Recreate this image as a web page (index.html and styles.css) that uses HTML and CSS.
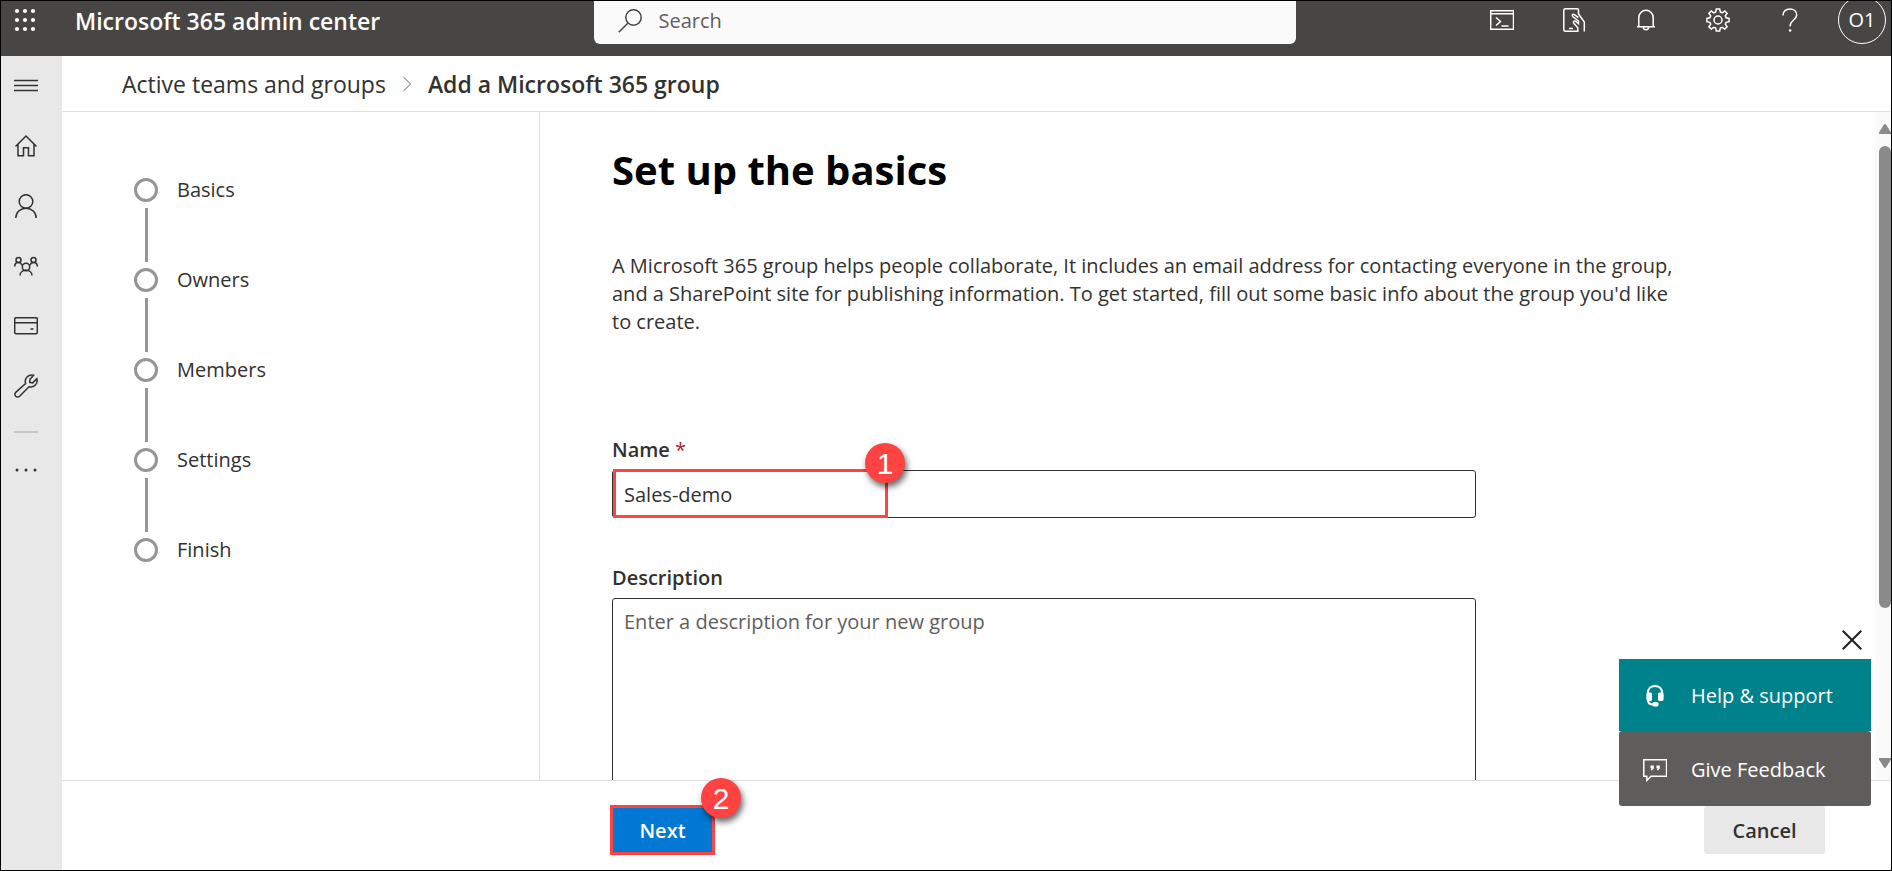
FILE: index.html
```html
<!DOCTYPE html>
<html lang="en">
<head>
<meta charset="utf-8">
<title>Add a Microsoft 365 group</title>
<link rel="stylesheet" href="styles.css">
</head>
<body>
<div class="app">
  <header class="topbar">
    <button class="icon-button launcher" aria-label="App launcher">
      <svg class="icon" viewBox="0 0 24 24"><circle cx="3" cy="3" r="2.1"/><circle cx="11" cy="3" r="2.1"/><circle cx="19" cy="3" r="2.1"/><circle cx="3" cy="12" r="2.1"/><circle cx="11" cy="12" r="2.1"/><circle cx="19" cy="12" r="2.1"/><circle cx="3" cy="21" r="2.1"/><circle cx="11" cy="21" r="2.1"/><circle cx="19" cy="21" r="2.1"/></svg>
    </button>
    <div class="brand">Microsoft 365 admin center</div>
    <div class="search">
      <svg class="icon" viewBox="0 0 24 24"><circle cx="15.500" cy="8.500" r="7.700"/><path d="M10 14L.8 23.200"/></svg>
      <input class="search-input" type="text" placeholder="Search" aria-label="Search">
    </div>
    <nav class="tools" aria-label="Tools">
      <button class="icon-button" aria-label="Shell">
        <svg class="icon" viewBox="0 0 24 24"><path d="M.7 2.700h22.800v18.600H.7zM.7 5.800h22.800M6 9.500l4.500 4L6 17.500M11.500 18h7"/></svg>
      </button>
      <button class="icon-button" aria-label="Mobile app">
        <svg class="icon" viewBox="0 0 24 24"><path d="M16.500 6V2.300Q16.500.8 15 .8H3.300Q1.800.8 1.800 2.300v19.400q0 1.500 1.500 1.500h12.500v-3.500l-4-4.500c-1-1.400.3-3 2-1.800l2.700 2.300V13l-5.500-4.200c-1.800-1.700-.2-3.200 1.400-2.200l4 3M16.500 6l5.800 8v9.500M7 20.500h4"/></svg>
      </button>
      <button class="icon-button" aria-label="Notifications">
        <svg class="icon" viewBox="0 0 24 24"><path d="M4.800 18.200V9.500a7.200 7.200 0 0 1 14.400 0v8.700M3 18.700h18M9.300 19a2.700 2.700 0 0 0 5.400 0"/></svg>
      </button>
      <button class="icon-button" aria-label="Settings">
        <svg class="icon" viewBox="0 0 24 24"><circle cx="12" cy="12" r="4"/><path d="M10.300 1h3.400l.6 3 1.900.8L18.800 3l2.300 2.300-1.800 2.600.8 1.900 3 .6v3.300l-3 .6-.8 1.900 1.800 2.600-2.300 2.300-2.600-1.800-1.900.8-.6 3h-3.400l-.6-3-1.900-.8-2.600 1.800-2.300-2.300 1.800-2.600-.8-1.900-3-.6v-3.300l3-.6.8-1.900-1.800-2.600L5.200 3l2.600 1.800L9.700 4z"/></svg>
      </button>
      <button class="icon-button" aria-label="Help">
        <svg class="icon" viewBox="0 0 24 24"><path d="M5 7.500C5 3.300 8 .9 11.900.9S18.700 3.300 18.700 7c0 4.800-6.600 5.300-6.600 10.800v.7"/><circle cx="12.100" cy="22.500" r=".6"/></svg>
      </button>
    </nav>
    <button class="avatar" aria-label="Account">O1</button>
  </header>

  <nav class="rail" aria-label="Main">
    <button class="icon-button" aria-label="Toggle navigation"><svg class="icon" viewBox="0 0 24 24"><path d="M0 6.500h24M0 11.500h24M0 16.500h24"/></svg></button>
    <a class="icon-button" href="#" aria-label="Home"><svg class="icon" viewBox="0 0 24 24"><path d="M1.500 12.500L12 2l10.500 10.500M4 10.500v11.200h5.500v-8h5v8H20V10.500"/></svg></a>
    <a class="icon-button" href="#" aria-label="Users"><svg class="icon" viewBox="0 0 24 24"><circle cx="12" cy="7.500" r="6.800"/><path d="M1.800 24c0-5.600 4.500-9.700 10.200-9.700S22.200 18.400 22.200 24"/></svg></a>
    <a class="icon-button" href="#" aria-label="Groups"><svg class="icon" viewBox="0 0 24 24"><circle cx="12" cy="13" r="3.700"/><circle cx="4.500" cy="6" r="2.500"/><circle cx="19.500" cy="6" r="2.500"/><path d="M6 21.500c0-7 12-7 12 0M.7 12.500c0-5.200 6-5.200 7.400-1.200M23.300 12.500c0-5.200-6-5.200-7.400-1.200"/></svg></a>
    <a class="icon-button" href="#" aria-label="Billing"><svg class="icon" viewBox="0 0 24 24"><rect x=".7" y="3.700" width="22.600" height="16" rx="1.200"/><path d="M.7 8.800h22.600M16.500 15h3"/></svg></a>
    <a class="icon-button" href="#" aria-label="Setup"><svg class="icon" viewBox="0 0 24 24"><path d="M19.500 1.300a6.500 6.500 0 0 0-7.900 8.300L1.700 18.400a2.700 2.700 0 0 0 3.900 3.900l9.400-9.500a6.500 6.500 0 0 0 7.900-8.100l-4.200 4.200-3-.6 .3-3z"/></svg></a>
    <hr class="rail-line">
    <button class="icon-button" aria-label="Show all"><svg class="icon" viewBox="0 0 24 24"><g fill="#323130" stroke="none"><circle cx="3" cy="12" r="1.500"/><circle cx="12" cy="12" r="1.500"/><circle cx="21" cy="12" r="1.500"/></g></svg></button>
  </nav>

  <nav class="breadcrumb" aria-label="Breadcrumb">
    <a class="crumb" href="#">Active teams and groups</a>
    <svg class="chevron" viewBox="0 0 8 16"><path d="M.5 1l7 7-7 7"/></svg>
    <span class="crumb crumb-current">Add a Microsoft 365 group</span>
  </nav>

  <div class="wizard">
    <ol class="steps">
      <li class="step">Basics</li>
      <li class="step">Owners</li>
      <li class="step">Members</li>
      <li class="step">Settings</li>
      <li class="step">Finish</li>
    </ol>
    <main class="content">
      <h1 class="title">Set up the basics</h1>
      <p class="intro">A Microsoft 365 group helps people collaborate, It includes an email address for contacting everyone in the group, and a SharePoint site for publishing information. To get started, fill out some basic info about the group you'd like to create.</p>
      <label class="label" for="name">Name <span class="required">*</span></label>
      <div class="field">
        <input class="input" id="name" type="text" value="Sales-demo">
        <div class="callout"><span class="badge">1</span></div>
      </div>
      <label class="label" for="description">Description</label>
      <textarea class="input textarea" id="description" placeholder="Enter a description for your new group"></textarea>
    </main>
    <div class="scrollbar" aria-hidden="true">
      <svg class="arrow" viewBox="0 0 12 10"><path d="M6 0l1 .6 5 8V10H0V8.600l5-8z"/></svg>
      <div class="track"><div class="thumb"></div></div>
      <svg class="arrow" viewBox="0 0 12 10"><path d="M6 10l1-.6 5-8V0H0v1.400l5 8z"/></svg>
    </div>
  </div>

  <footer class="footer">
    <div class="next-wrap">
      <button class="button button-primary">Next</button>
      <span class="badge">2</span>
    </div>
    <button class="button">Cancel</button>
  </footer>

  <aside class="help">
    <button class="close" aria-label="Close"><svg class="close-icon" viewBox="0 0 20 20"><path d="M.7.7l18.600 18.600M19.300.7L.7 19.300"/></svg></button>
    <button class="help-button help-support">
      <svg class="icon" viewBox="0 0 24 24"><path d="M4.800 15V9.500C4.800 5 7.800 2 12 2s7.200 3 7.200 7.500V15" stroke-width="2.200"/><g stroke="none" fill="#fff"><rect x="3.500" y="8.500" width="5.500" height="8.500" rx="1.500"/><rect x="15" y="8.500" width="5.500" height="8.500" rx="1.500"/><rect x="9.500" y="18" width="6" height="4.500" rx="1.500"/></g><path d="M5 16c0 3 2 4.500 5 4.500" stroke-width="2.200"/></svg>
      Help &amp; support
    </button>
    <button class="help-button help-feedback">
      <svg class="icon" viewBox="0 0 24 24"><path d="M.8 1.800h22.800v16.400H8L3.800 22.500v-4.300h-3z"/><path d="M7.500 7.500h3.300v3L9 12.300H7.800l.7-2h-1zM13.500 7.500h3.300v3L15 12.300h-1.200l.7-2h-1z" fill="#fff" stroke="none"/></svg>
      Give Feedback
    </button>
  </aside>
</div>
</body>
</html>
```
FILE: styles.css
```css
*,
*::before,
*::after {
  box-sizing: border-box;
}

body {
  margin: 0;
  font-family: "Open Sans", "Noto Sans", sans-serif;
  font-size: 20px;
  line-height: 28px;
  color: #323130;
}

button,
input,
textarea {
  margin: 0;
  padding: 0;
  border: 0;
  background: none;
  font: inherit;
  color: inherit;
}

.app {
  position: relative;
  display: grid;
  grid-template: 55px 56px minmax(0, 1fr) 90px / 61px minmax(0, 1fr);
  height: 100vh;
  border: 1px solid #000;
  background: #fff;
  overflow: hidden;
}

.icon {
  display: block;
  width: 24px;
  height: 24px;
  fill: none;
  stroke: currentColor;
  stroke-width: 1.5;
}

.icon-button {
  display: flex;
  justify-content: center;
  color: inherit;
}

.topbar {
  grid-column: 1 / -1;
  display: flex;
  align-items: flex-start;
  background: #484644;
  color: #fff;
}

.launcher {
  padding: 7px 13px;
}

.launcher .icon {
  stroke: none;
  fill: #fff;
}

.brand {
  flex: 1 1 0;
  padding: 6px 12px 0 24px;
  font-size: 23px;
  font-weight: 600;
}

.search {
  flex: 0 1 702px;
  display: flex;
  align-items: center;
  gap: 17px;
  height: 43px;
  padding: 0 24px 4px;
  border-radius: 0 0 6px 6px;
  background: #fafafa;
  color: #484644;
}

.search-input {
  flex: 1;
  min-width: 0;
}

.search-input::placeholder {
  color: #605e5c;
  opacity: 1;
}

.tools {
  flex: 1 1 0;
  display: flex;
  justify-content: flex-end;
  gap: 48px;
  padding: 7px 36px 0 0;
}

.avatar {
  flex: none;
  width: 48px;
  height: 48px;
  margin: -5px 5px 0 0;
  border: 1px solid #fff;
  border-radius: 50%;
}

.rail {
  grid-row: 2 / -1;
  display: flex;
  flex-direction: column;
  gap: 36px;
  padding: 18px 24px 0 13px;
  background: #e8e8e8;
}

.rail-line {
  width: 24px;
  height: 2px;
  margin: -3px 0 -11px;
  border: 0;
  background: #c8c6c4;
}

.breadcrumb {
  display: flex;
  align-items: center;
  gap: 17px;
  padding: 0 60px;
  border-bottom: 1px solid #e1dfdd;
  font-size: 23px;
}

.crumb {
  color: inherit;
  text-decoration: none;
}

.crumb-current {
  font-weight: 600;
}

.chevron {
  width: 8px;
  height: 16px;
  fill: none;
  stroke: #605e5c;
}

.wizard {
  display: grid;
  grid-template-columns: 478px minmax(0, 1fr) 16px;
  min-height: 0;
}

.steps {
  margin: 0;
  padding: 64px 59px 0 72px;
  border-right: 1px solid #e1dfdd;
  list-style: none;
}

.step {
  display: grid;
  grid-template: 28px 54px / 24px 1fr;
  gap: 4px 19px;
  align-items: center;
  margin-bottom: 4px;
}

.step::before {
  content: "";
  width: 24px;
  height: 24px;
  border: 3px solid #979593;
  border-radius: 50%;
}

.step::after {
  content: "";
  grid-area: 2 / 1;
  justify-self: center;
  width: 3px;
  height: 54px;
  background: #979593;
}

.step:last-child::after {
  display: none;
}

.content {
  min-height: 0;
  padding: 30px 72px 0;
  overflow: hidden;
}

.title {
  margin: 0;
  font-size: 40px;
  font-weight: 700;
  line-height: 56px;
  color: #000;
}

.intro {
  max-width: 1072px;
  margin: 54px 0 100px;
}

.label {
  display: block;
  margin-bottom: 6px;
  font-weight: 600;
}

.required {
  color: #a4262c;
  font-weight: 400;
}

.field {
  position: relative;
  max-width: 864px;
  margin-bottom: 46px;
}

.input {
  display: block;
  width: 100%;
  max-width: 864px;
  height: 48px;
  padding: 0 11px;
  border: 1px solid #323130;
  border-radius: 3px;
}

.textarea {
  height: 260px;
  padding-top: 9px;
  resize: none;
}

.textarea::placeholder {
  color: #605e5c;
  opacity: 1;
}

.callout {
  position: absolute;
  top: -1px;
  left: 1px;
  width: 275px;
  height: 49px;
  border: 3px solid #ff4343;
  pointer-events: none;
}

.badge {
  position: absolute;
  top: -29px;
  right: -20px;
  width: 40px;
  height: 40px;
  border-radius: 50%;
  background: #ff4343;
  box-shadow: 2px 4px 6px rgba(0, 0, 0, 0.6);
  color: #fff;
  font-family: "Liberation Sans", Arial, sans-serif;
  font-size: 30px;
  line-height: 42px;
  text-align: center;
}

.scrollbar {
  display: flex;
  flex-direction: column;
  padding: 12px 0 12px 4px;
  gap: 12px;
  background: #fafafa;
}

.arrow {
  width: 12px;
  height: 10px;
  fill: #8a8a8a;
}

.track {
  flex: 1;
}

.thumb {
  width: 12px;
  height: 77%;
  border-radius: 6px;
  background: #8a8a8a;
}

.footer {
  display: flex;
  justify-content: space-between;
  align-items: flex-start;
  padding: 24px 65px 0 548px;
  border-top: 1px solid #e1dfdd;
}

.next-wrap {
  position: relative;
}

.next-wrap .badge {
  top: -27px;
  right: -26px;
}

.button {
  min-width: 123px;
  height: 50px;
  padding-top: 2px;
  border: 1px solid #fff;
  border-radius: 4px;
  background: #e8e8e8;
  font-weight: 600;
}

.button-primary {
  min-width: 105px;
  border: 3px solid #ff4343;
  border-radius: 0;
  background: #0078d4;
  color: #fff;
}

.help {
  position: absolute;
  right: 20px;
  bottom: 64px;
  display: flex;
  flex-direction: column;
  width: 252px;
}

.close {
  align-self: flex-end;
  padding: 9px;
}

.close-icon {
  display: block;
  width: 20px;
  height: 20px;
  fill: none;
  stroke: #201f1e;
  stroke-width: 2;
}

.help-button {
  display: flex;
  align-items: center;
  gap: 24px;
  height: 75px;
  padding: 2px 24px 0;
  color: #fff;
  font-weight: 500;
  white-space: nowrap;
}

.help-support {
  height: 72px;
  background: #00828c;
}

.help-feedback {
  border-radius: 3px;
  background: #5f5d5b;
}
```
